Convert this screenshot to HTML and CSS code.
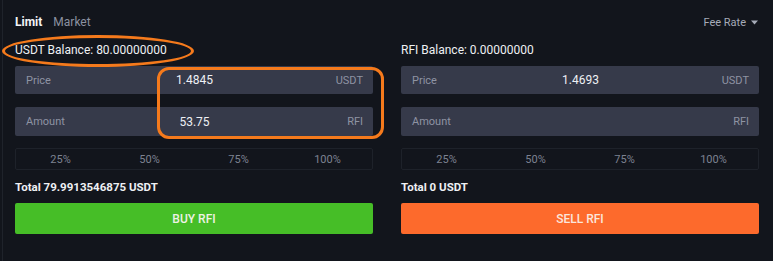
FILE: index.html
```html
<!DOCTYPE html>
<html>
<head>
<meta charset="utf-8">
<link rel="stylesheet" href="styles.css">
</head>
<body>
<div class="panel">
  <div class="topbar">
    <div class="tabs">
      <span class="tab active">Limit</span>
      <span class="tab">Market</span>
    </div>
    <div class="fee">Fee Rate <svg class="caret" width="7" height="5" viewBox="0 0 7 5"><path d="M0 0.5h7L3.5 4.5z" fill="#a6abb8"/></svg></div>
  </div>
  <div class="cols">
    <div class="col">
      <div class="balance">USDT Balance: 80.00000000</div>
      <div class="field"><span class="label">Price</span><span class="value">1.4845</span><span class="unit">USDT</span></div>
      <div class="field"><span class="label">Amount</span><span class="value">53.75</span><span class="unit">RFI</span></div>
      <div class="pcts"><span>25%</span><span>50%</span><span>75%</span><span>100%</span></div>
      <div class="total">Total 79.9913546875 USDT</div>
      <button class="btn buy">BUY RFI</button>
      <div class="mark-ellipse"></div>
      <div class="mark-box"></div>
    </div>
    <div class="col">
      <div class="balance">RFI Balance: 0.00000000</div>
      <div class="field"><span class="label">Price</span><span class="value">1.4693</span><span class="unit">USDT</span></div>
      <div class="field"><span class="label">Amount</span><span class="value"></span><span class="unit">RFI</span></div>
      <div class="pcts"><span>25%</span><span>50%</span><span>75%</span><span>100%</span></div>
      <div class="total">Total 0 USDT</div>
      <button class="btn sell">SELL RFI</button>
    </div>
  </div>
</div>
</body>
</html>
```
FILE: styles.css
```css
html, body {
  margin: 0;
  padding: 0;
  background: #12151c;
}
body {
  width: 773px;
  height: 261px;
  overflow: hidden;
  font-family: Roboto, "Liberation Sans", sans-serif;
  color: #e6e8ee;
}
.panel {
  height: 261px;
  box-sizing: border-box;
  border-left: 1px solid #1f232b;
  margin-left: 2px;
  padding: 0 14px 0 12px;
}
.topbar {
  height: 44px;
  display: flex;
  align-items: center;
  justify-content: space-between;
}
.tabs {
  display: flex;
  gap: 11px;
  font-size: 12px;
}
.tab {
  color: #8c91a0;
}
.tab.active {
  color: #f2f3f6;
  font-weight: 700;
}
.fee {
  font-size: 11px;
  color: #a6abb8;
  display: flex;
  align-items: center;
  gap: 5px;
  margin-right: 1px;
}
.cols {
  display: grid;
  grid-template-columns: 358px 358px;
  column-gap: 28px;
}
.col {
  position: relative;
  display: flex;
  flex-direction: column;
}
.balance {
  font-size: 12px;
  color: #eef0f3;
  height: 13px;
  line-height: 13px;
}
.field {
  margin-top: 9px;
  height: 28px;
  background: #363a4a;
  border-radius: 2px;
  display: grid;
  grid-template-columns: 1fr auto 1fr;
  align-items: center;
  padding: 0 10px 0 11px;
  font-size: 11px;
}
.field + .field {
  margin-top: 13px;
  height: 29px;
}
.label {
  color: #8e93a3;
}
.value {
  color: #eef0f4;
  font-size: 12px;
  text-align: center;
}
.unit {
  color: #8e93a3;
  text-align: right;
}
.pcts {
  margin-top: 12px;
  height: 22px;
  box-sizing: border-box;
  border: 1px solid #1e222a;
  border-radius: 2px;
  display: grid;
  grid-template-columns: repeat(4, 1fr);
  align-items: center;
  text-align: center;
  font-size: 11px;
  color: #7d8291;
}
.total {
  margin-top: 10px;
  font-size: 11.5px;
  font-weight: 700;
  color: #eef0f3;
  height: 14px;
  line-height: 14px;
}
.btn {
  margin-top: 9px;
  height: 31px;
  border: none;
  border-radius: 2px;
  font-family: inherit;
  font-size: 12px;
  font-weight: 500;
  color: #eef2e4;
  padding: 0;
}
.buy { background: #46be27; }
.sell { background: #fd6a2c; color: #fbe6dc; }
.mark-ellipse {
  position: absolute;
  left: -13px;
  top: -9px;
  width: 186px;
  height: 26px;
  border: 3px solid #f57a1c;
  border-radius: 50%;
  pointer-events: none;
}
.mark-box {
  position: absolute;
  left: 142px;
  top: 23px;
  width: 221px;
  height: 66px;
  border: 3px solid #f57a1c;
  border-radius: 12px;
  pointer-events: none;
}
```
